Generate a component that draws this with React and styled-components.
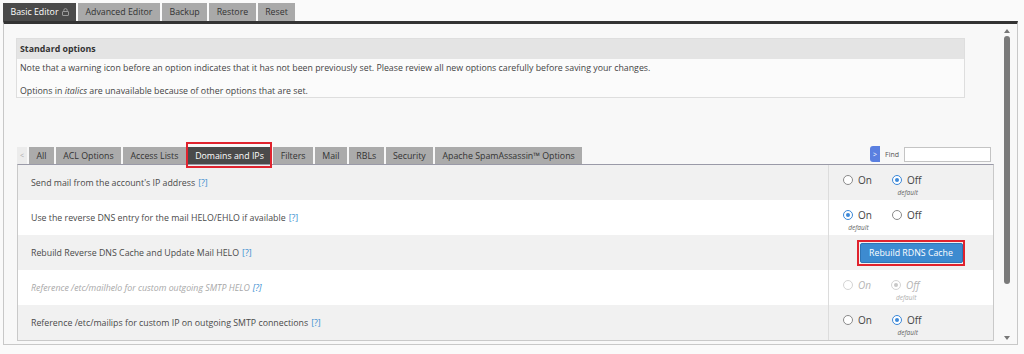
import React from "react";
import styled, { createGlobalStyle, css } from "styled-components";

const GlobalStyle = createGlobalStyle`
  html, body {
    margin: 0;
    padding: 0;
    background: #fafafa;
    font-family: "Open Sans", "Liberation Sans", sans-serif;
  }
`;

const Page = styled.div`
  width: 1024px;
  height: 354px;
  padding: 3px 0 0 3px;
  box-sizing: border-box;
  overflow: hidden;
`;

const TopTabs = styled.div`
  display: flex;
  gap: 2px;
  height: 18px;
`;

const TopTab = styled.div`
  display: flex;
  align-items: center;
  gap: 3px;
  padding: 0 7.5px;
  font-size: 8.8px;
  color: #333;
  background: #a9a9a9;
  ${(p) =>
    p.active &&
    css`
      background: #4a4a4a;
      color: #fff;
    `}
`;

const Frame = styled.div`
  width: 1013px;
  height: 320px;
  border-top: 3px solid #333;
  border-left: 1px solid #c8c8c8;
  border-right: 1px solid #c8c8c8;
  border-bottom: 1px solid #c8c8c8;
  background: #f8f8f8;
  display: flex;
  overflow: hidden;
`;

const Content = styled.div`
  flex: 1;
  padding: 14px 0 0 12px;
`;

const Scrollbar = styled.div`
  width: 22px;
  display: flex;
  flex-direction: column;
  align-items: center;
  padding: 5px 0 4px 1px;
  gap: 3px;
  box-sizing: border-box;
`;

const Arrow = styled.div`
  width: 0;
  height: 0;
  border-left: 3px solid transparent;
  border-right: 3px solid transparent;
  ${(p) =>
    p.down
      ? css`
          border-top: 4px solid #777;
        `
      : css`
          border-bottom: 4px solid #777;
        `}
`;

const Thumb = styled.div`
  width: 6px;
  height: 248px;
  border-radius: 3px;
  background: #7a7a7a;
`;

const Track = styled.div`
  flex: 1;
  display: flex;
  flex-direction: column;
  align-items: center;
`;

const InfoBox = styled.div`
  width: 947px;
  border: 1px solid #dedede;
  background: #fbfbfb;
`;

const InfoHead = styled.div`
  height: 20px;
  display: flex;
  align-items: center;
  padding-left: 3px;
  background: #e4e4e4;
  font-size: 8.8px;
  font-weight: 700;
  color: #333;
`;

const InfoText = styled.p`
  margin: ${(p) => p.top}px 0 0;
  padding: 0 3px;
  line-height: 12px;
  font-size: 8.8px;
  color: #444;
`;

const TabBar = styled.div`
  margin-top: 48px;
  width: 977px;
  margin-left: 1px;
  display: flex;
  align-items: flex-end;
  justify-content: space-between;
`;

const SubTabs = styled.div`
  display: flex;
  gap: 2px;
  height: 17px;
`;

const SubTab = styled.div`
  position: relative;
  display: flex;
  align-items: center;
  padding: 0 7.4px;
  font-size: 8.8px;
  color: #333;
  background: #ababab;
  ${(p) =>
    p.prev &&
    css`
      padding: 0 3px;
      background: #ececec;
      color: #aaa;
      font-size: 7px;
    `}
  ${(p) =>
    p.active &&
    css`
      background: #4a4a4a;
      color: #fff;
    `}
  ${(p) =>
    p.marked &&
    css`
      &::after {
        content: "";
        position: absolute;
        inset: -5px -1px -4px -2px;
        border: 2px solid #e0232e;
      }
    `}
`;

const FindBox = styled.div`
  display: flex;
  align-items: center;
  gap: 5px;
  margin-bottom: 2px;
  margin-right: 3px;
`;

const FindButton = styled.div`
  width: 10px;
  height: 16px;
  border-radius: 3px 0 0 3px;
  background: #5a7fe0;
  color: #fff;
  font-size: 7px;
  display: flex;
  align-items: center;
  justify-content: center;
`;

const FindLabel = styled.span`
  font-size: 7px;
  color: #555;
`;

const FindInput = styled.div`
  width: 85px;
  height: 13px;
  border: 1px solid #c4c4c4;
  background: #fff;
`;

const Table = styled.div`
  width: 975px;
  margin-left: 1px;
  border: 1px solid #c9c9c9;
  border-top: 1px solid #9a9aa8;
`;

const Row = styled.div`
  display: grid;
  grid-template-columns: 1fr 165px;
  height: 35px;
  background: ${(p) => (p.alt ? "#f1f1f1" : "#ffffff")};
`;

const Label = styled.div`
  display: flex;
  align-items: center;
  padding-left: 13px;
  font-size: 8.8px;
  color: ${(p) => (p.disabled ? "#a8a8a8" : "#4a4a4a")};
  font-style: ${(p) => (p.disabled ? "italic" : "normal")};
`;

const Help = styled.a`
  margin-left: 3px;
  color: #3a8ed0;
  font-style: normal;
  ${(p) =>
    p.disabled &&
    css`
      font-style: italic;
    `}
`;

const Control = styled.div`
  border-left: 1px solid #dcdcdc;
  display: flex;
  align-items: flex-start;
  padding: 8px 0 0 14px;
  gap: 20px;
  ${(p) =>
    p.center &&
    css`
      align-items: center;
      justify-content: center;
      padding: 0;
    `}
`;

const Option = styled.div`
  display: flex;
  flex-direction: column;
  align-items: center;
`;

const OptionLine = styled.div`
  display: flex;
  align-items: center;
  gap: 5px;
  font-size: 10px;
  color: ${(p) => (p.disabled ? "#b5b5b5" : "#444")};
  font-style: ${(p) => (p.disabled ? "italic" : "normal")};
`;

const Radio = styled.span`
  width: 8px;
  height: 8px;
  border-radius: 50%;
  border: 1px solid ${(p) => (p.disabled ? "#d4d4d4" : p.checked ? "#3b88d8" : "#8a8a8a")};
  background: #fff;
  display: flex;
  align-items: center;
  justify-content: center;
  &::after {
    content: "";
    width: 4px;
    height: 4px;
    border-radius: 50%;
    background: ${(p) =>
      p.checked ? (p.disabled ? "#c8c8c8" : "#3b88d8") : "transparent"};
  }
`;

const DefaultNote = styled.span`
  margin-top: 1px;
  font-size: 6.5px;
  font-style: italic;
  color: ${(p) => (p.disabled ? "#b0b0b0" : "#666")};
  padding-left: 2px;
`;

const RebuildButton = styled.button`
  position: relative;
  width: 103px;
  height: 20px;
  border: 1px solid #2f75b5;
  background: #3d8bd0;
  color: #fff;
  font-family: "Open Sans", "Liberation Sans", sans-serif;
  font-size: 8.8px;
  padding: 0;
  border-radius: 2px;
  &::after {
    content: "";
    position: absolute;
    inset: -4px -3px -4px -4px;
    border: 2px solid #e0232e;
  }
`;

const LockIcon = () => (
  <svg width="7" height="8" viewBox="0 0 7 8">
    <rect x="0.5" y="3.5" width="6" height="4" rx="0.5" fill="none" stroke="#9a9a9a" />
    <path d="M1.8 3.5V2.3a1.7 1.7 0 0 1 3.4 0v1.2" fill="none" stroke="#9a9a9a" />
  </svg>
);

const topTabs = ["Basic Editor", "Advanced Editor", "Backup", "Restore", "Reset"];
const subTabs = [
  "All",
  "ACL Options",
  "Access Lists",
  "Domains and IPs",
  "Filters",
  "Mail",
  "RBLs",
  "Security",
  "Apache SpamAssassin™ Options",
];

const rows = [
  { label: "Send mail from the account's IP address", value: "off", def: "off" },
  { label: "Use the reverse DNS entry for the mail HELO/EHLO if available", value: "on", def: "on" },
  { label: "Rebuild Reverse DNS Cache and Update Mail HELO", button: true },
  { label: "Reference /etc/mailhelo for custom outgoing SMTP HELO", value: "off", def: "off", disabled: true },
  { label: "Reference /etc/mailips for custom IP on outgoing SMTP connections", value: "off", def: "off" },
];

function OnOff({ value, def, disabled }) {
  return (
    <>
      {["on", "off"].map((v) => (
        <Option key={v}>
          <OptionLine disabled={disabled}>
            <Radio checked={value === v} disabled={disabled} />
            {v === "on" ? "On" : "Off"}
          </OptionLine>
          {def === v && <DefaultNote disabled={disabled}>default</DefaultNote>}
        </Option>
      ))}
    </>
  );
}

export default function App() {
  return (
    <>
      <GlobalStyle />
      <Page>
        <TopTabs>
          {topTabs.map((t, i) => (
            <TopTab key={t} active={i === 0}>
              {t}
              {i === 0 && <LockIcon />}
            </TopTab>
          ))}
        </TopTabs>
        <Frame>
          <Content>
            <InfoBox>
              <InfoHead>Standard options</InfoHead>
              <InfoText top={3}>
                Note that a warning icon before an option indicates that it has not been previously set.
                Please review all new options carefully before saving your changes.
              </InfoText>
              <InfoText top={11}>
                Options in <i>italics</i> are unavailable because of other options that are set.
              </InfoText>
            </InfoBox>
            <TabBar>
              <SubTabs>
                <SubTab prev>&lt;</SubTab>
                {subTabs.map((t) => (
                  <SubTab key={t} active={t === "Domains and IPs"} marked={t === "Domains and IPs"}>
                    {t}
                  </SubTab>
                ))}
              </SubTabs>
              <FindBox>
                <FindButton>&gt;</FindButton>
                <FindLabel>Find</FindLabel>
                <FindInput />
              </FindBox>
            </TabBar>
            <Table>
              {rows.map((r, i) => (
                <Row key={r.label} alt={i % 2 === 0}>
                  <Label disabled={r.disabled}>
                    {r.label}
                    <Help disabled={r.disabled}>[?]</Help>
                  </Label>
                  {r.button ? (
                    <Control center>
                      <RebuildButton>Rebuild RDNS Cache</RebuildButton>
                    </Control>
                  ) : (
                    <Control>
                      <OnOff value={r.value} def={r.def} disabled={r.disabled} />
                    </Control>
                  )}
                </Row>
              ))}
            </Table>
          </Content>
          <Scrollbar>
            <Arrow />
            <Track>
              <Thumb />
            </Track>
            <Arrow down />
          </Scrollbar>
        </Frame>
      </Page>
    </>
  );
}
